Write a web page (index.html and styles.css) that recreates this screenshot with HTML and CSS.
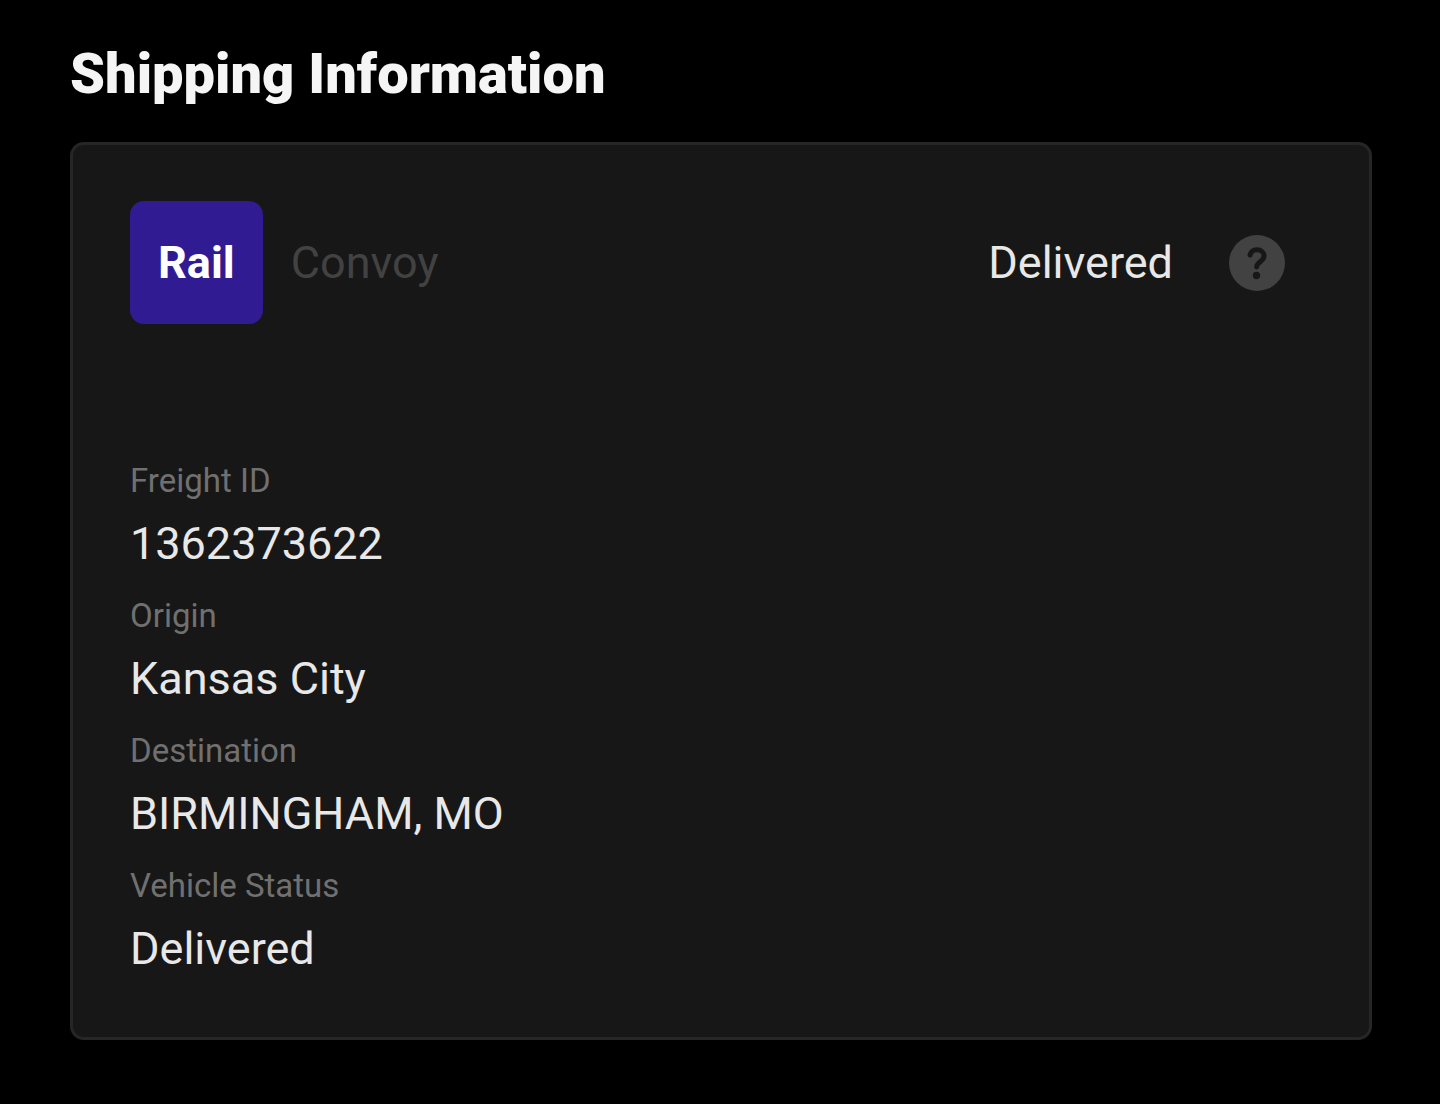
FILE: index.html
```html
<!DOCTYPE html>
<html lang="en">
<head>
<meta charset="UTF-8">
<meta name="viewport" content="width=device-width, initial-scale=1.0">
<title>Shipping Information</title>
<link rel="stylesheet" href="styles.css">
</head>
<body>

<main class="shipping">
    <h1>Shipping Information</h1>
    <section class="card">
        <div class="card-header">
            <div class="tabs">
                <button type="button" class="tab active">Rail</button>
                <button type="button" class="tab">Convoy</button>
            </div>
            <span class="status">Delivered</span>
            <button type="button" class="help" aria-label="Help">
                <svg viewBox="0 0 56 56" aria-hidden="true">
                    <circle class="help-disc" cx="28" cy="28" r="28"/>
                    <path class="help-hook" d="M21 20C22 16.500 24.800 14.800 28 14.800C32 14.800 35 17.300 35 21C35 26.500 27.800 26.800 27.600 32"/>
                    <circle class="help-dot" cx="27.500" cy="40.500" r="3.700"/>
                </svg>
            </button>
        </div>
        <dl class="details">
            <dt>Freight ID</dt>
            <dd>1362373622</dd>
            <dt>Origin</dt>
            <dd>Kansas City</dd>
            <dt>Destination</dt>
            <dd>BIRMINGHAM, MO</dd>
            <dt>Vehicle Status</dt>
            <dd>Delivered</dd>
        </dl>
    </section>
</main>

</body>
</html>
```
FILE: styles.css
```css
* {
    box-sizing: border-box;
}

body {
    font-family: Roboto, Arial, sans-serif;
    background-color: #000;
    color: #e8e8e8;
    margin: 0;
}

.shipping {
    padding: 40px 68px 64px 70px;
}

h1 {
    color: #f5f5f5;
    font-size: 56px;
    font-weight: 900;
    line-height: 68px;
    margin: 0 0 34px;
}

.card {
    background-color: #171717;
    border: 3px solid #262626;
    border-radius: 14px;
    padding: 56px 84px 46px 57px;
}

.card-header {
    display: flex;
    align-items: center;
    margin-bottom: 127px;
}

.tabs {
    display: flex;
    margin-right: auto;
}

.tab {
    background: none;
    border: none;
    border-radius: 14px;
    color: #424242;
    cursor: pointer;
    font-family: inherit;
    font-size: 45px;
    line-height: 67px;
    padding: 28px;
}

.tab.active {
    background-color: #311b92;
    color: #fff;
    font-weight: 700;
}

.status {
    font-size: 45px;
    margin-right: 56px;
}

.help {
    background: none;
    border: none;
    cursor: pointer;
    padding: 0;
}

.help svg {
    display: block;
    width: 56px;
    height: 56px;
}

.help-disc {
    fill: #424242;
}

.help-hook {
    fill: none;
    stroke: #171717;
    stroke-width: 5;
    stroke-linecap: round;
}

.help-dot {
    fill: #171717;
}

.details {
    margin: 0;
}

dt {
    color: #707070;
    font-size: 33px;
    line-height: 59px;
}

dd {
    font-size: 45px;
    line-height: 68px;
    margin: 0 0 8px;
}
```
